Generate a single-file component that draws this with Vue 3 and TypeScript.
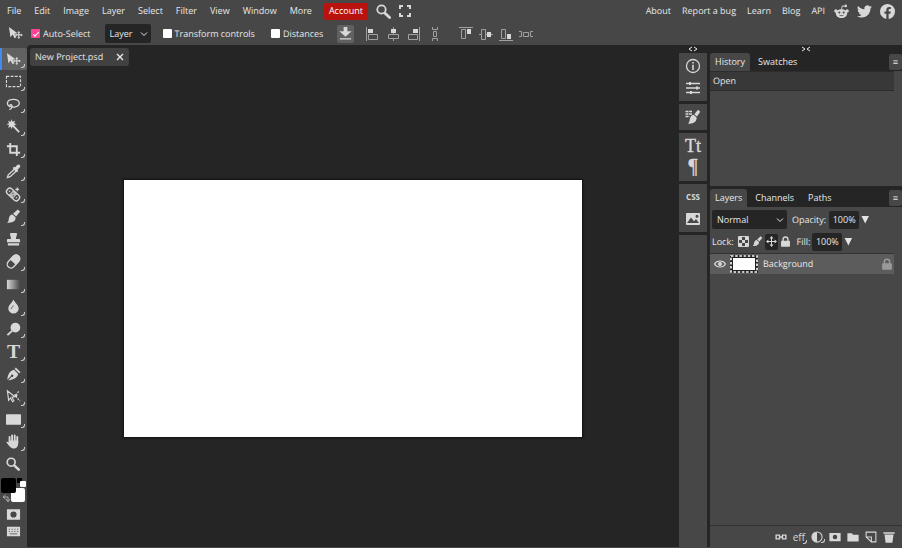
<script setup lang="ts">
import { ref } from 'vue'

interface Item {
  name: string
  icon: string
  corner?: boolean
}

const menus = ['File', 'Edit', 'Image', 'Layer', 'Select', 'Filter', 'View', 'Window', 'More']
const links = ['About', 'Report a bug', 'Learn', 'Blog', 'API']

const moveIcon =
  '<path d="M1 1l1.600 11 2.400-3 2 4 1.900-1-2-3.800 3.300-.6z"/><path d="M11.500 6.500v6M8.500 9.500h6" stroke="currentColor" stroke-width="1.200"/><path d="M11.500 5.200l1.600 1.900h-3.200zM11.500 13.800l1.600-1.900h-3.200zM7.200 9.500l1.900-1.600v3.200zM15.800 9.500l-1.900-1.600v3.200z"/>'
const brushIcon =
  '<path d="M12.500 .5l2.500 2.200-4.200 5.200-3.300-2.800z"/><path d="M6.800 5.900l3.400 3c.3 3.800-2.600 6.300-9.200 5.700 2.200-1 1.600-2.900 2.100-4.700C3.600 7.500 5 6 6.800 5.900z"/>'
const searchIcon =
  '<circle cx="5.500" cy="5.500" r="4.200" fill="none" stroke="currentColor" stroke-width="1.800"/><path d="M9 9.200l4.600 4.300" stroke="currentColor" stroke-width="2.800" stroke-linecap="round"/>'
const lockIcon =
  '<rect x="1.500" y="7" width="13" height="8.500" rx="1"/><path d="M4.500 8V5a3.500 3.500 0 017 0v3" fill="none" stroke="currentColor" stroke-width="2"/>'

const tools: Item[] = [
  { name: 'Move Tool', corner: true, icon: moveIcon },
  { name: 'Rectangle Select', corner: true, icon: '<rect x=".5" y="2.500" width="15" height="11" fill="none" stroke="currentColor" stroke-width="1.200" stroke-dasharray="3 1.500"/>' },
  { name: 'Lasso Select', corner: true, icon: '<path d="M4.500 10.500C-.5 8 1 2.500 8 2.500s8.500 6.500 2 8c-3 .7-6 0-6-1.500s3-1 2.500 1.200c-.4 1.800-1.700 3-3 3.300" fill="none" stroke="currentColor" stroke-width="1.400"/>' },
  { name: 'Magic Wand', corner: true, icon: '<path d="M6 5.500l8 8.500" stroke="currentColor" stroke-width="2"/><path d="M6 0l.9 2.800L9.700 1.800 8.700 4.600l2.800.9-2.800.9 1 2.800-2.800-1L6 11l-.9-2.800-2.800 1 1-2.800L.5 5.500l2.800-.9-1-2.800 2.800 1z"/>' },
  { name: 'Crop Tool', corner: true, icon: '<path d="M4.500 1v10.500H15M1 4.500h10.500V15" fill="none" stroke="currentColor" stroke-width="2"/>' },
  { name: 'Eyedropper', corner: true, icon: '<path d="M9 5.500l2 2-6.500 6-3 1 .9-3z" fill="none" stroke="currentColor" stroke-width="1.400"/><path d="M7 4.300l1.500-1.300 1 .8 2.400-2.700c2-1.700 4.400.5 2.800 2.500L12.200 6.200l.9 1.300-1.500 1.400z"/>' },
  { name: 'Spot Healing Brush', corner: true, icon: '<g transform="rotate(43 7.500 8)"><rect x="-.5" y="4.500" width="16" height="7" rx="3" fill="none" stroke="currentColor" stroke-width="1.400"/><rect x="4.500" y="4.500" width="6" height="7" opacity=".8"/><path d="M2 7h1v2H2zM12 7h1v2h-1z"/><circle cx="6.500" cy="7" r=".7" fill="#474747"/><circle cx="8.500" cy="9" r=".7" fill="#474747"/></g><path d="M12 .5v4M10 2.500h4" stroke="currentColor" stroke-width="1.300"/>' },
  { name: 'Brush Tool', corner: true, icon: brushIcon },
  { name: 'Clone Tool', icon: '<path d="M4.500 1h7c.8 2.500-1 4-.9 6.500H14c.6 0 1 .4 1 1V11H1V8.500c0-.6.400-1 1-1h3.400C5.500 5 3.700 3.500 4.500 1zM2 12h12v2.500H2z"/>' },
  { name: 'Eraser Tool', corner: true, icon: '<g transform="rotate(-48 8 8)"><rect x="0" y="4" width="16" height="8" rx="4" fill="none" stroke="currentColor" stroke-width="1.400"/><path d="M7 3.500h5a4.500 4.500 0 010 9H7z"/></g>' },
  { name: 'Gradient Tool', corner: true, icon: '<defs><linearGradient id="ramp"><stop offset="0" stop-color="#d8d8d8"/><stop offset="1" stop-color="#474747"/></linearGradient></defs><rect x="1" y="3" width="14" height="10" fill="url(#ramp)"/>' },
  { name: 'Blur Tool', corner: true, icon: '<path d="M8 .5c1 3 5.500 5.800 5.500 9.500a5.500 5.500 0 01-11 0C2.500 6.300 7 3.500 8 .5z"/><path d="M7.500 7c.2 2-2 2-2.200 3.500" fill="none" stroke="#474747"/>' },
  { name: 'Dodge Tool', corner: true, icon: '<circle cx="10" cy="6" r="5.200"/><path d="M6.500 9.500L1.500 14" stroke="currentColor" stroke-width="2"/>' },
  { name: 'Type Tool', corner: true, icon: '<text x="8" y="14.500" text-anchor="middle" font-family="Liberation Serif, serif" font-weight="bold" font-size="21">T</text>' },
  { name: 'Pen Tool', corner: true, icon: '<path d="M10.500 .5l5 5L14 6.700 9.200 2z"/><path d="M8.500 3l4.500 4.500c-1 4-4 5.500-10.800 6.800L6 10.500A1.300 1.300 0 105.300 9.600L1.300 13.500C2.300 7.500 4 4 8.500 3z"/>' },
  { name: 'Path Select', corner: true, icon: '<path d="M1.500 2l1.300 10 2-2.500 2.200 4 1.400-1-2-3.800 3-.5z" fill="none" stroke="currentColor" stroke-width="1.200"/><path d="M13.500 2.500L10 7.500l5 5.500" fill="none" stroke="currentColor" stroke-width="1.200" stroke-dasharray="2 1.200"/><path d="M9 5.500h3v3H9z"/>' },
  { name: 'Rectangle', corner: true, icon: '<rect x="0" y="2.500" width="16" height="11" rx=".5"/>' },
  { name: 'Hand Tool', corner: true, icon: '<path d="M3.800 3.200v5M6.500 1.500v6M9.300 1.500v6M12 3v6" stroke="currentColor" stroke-width="2" stroke-linecap="round"/><path d="M3 7h10v3c0 3.500-2 5.500-4.500 5.500C5 15.500 3.500 12.500.6 9.300c-.3-1.400 1.100-1.500 2.400-.3z"/>' },
  { name: 'Zoom Tool', icon: searchIcon },
]

const aligns: Item[] = [
  { name: 'Align left edges', icon: '<path d="M2.500 1v14" stroke="#a0a0a0"/><path d="M4 3h5v4H4z"/><path d="M4.500 8.500h9v5h-9z" fill="none" stroke="#a0a0a0"/>' },
  { name: 'Align horizontal centers', icon: '<path d="M8.500 1v14" stroke="#a0a0a0"/><path d="M6 3h5v4H6z"/><path d="M3.500 8.500h10v4h-10z" fill="#474747" stroke="#a0a0a0"/>' },
  { name: 'Align right edges', icon: '<path d="M13.500 1v14" stroke="#a0a0a0"/><path d="M7 3h5v4H7z"/><path d="M2.500 8.500h9v5h-9z" fill="none" stroke="#a0a0a0"/>' },
  { name: 'Distribute vertically', icon: '<path d="M5.500 1v2.500h5V1M5.500 15v-2.500h5V15M6.500 5.500h3v5h-3z" fill="none" stroke="#a0a0a0"/>' },
]
const alignsTop: Item[] = [
  { name: 'Align top edges', icon: '<path d="M1 1.500h14" stroke="#a0a0a0"/><path d="M9 3h4v5H9z"/><path d="M3.500 3.500h4v9h-4z" fill="none" stroke="#a0a0a0"/>' },
  { name: 'Align vertical centers', icon: '<path d="M1 8.500h14" stroke="#a0a0a0"/><path d="M9 6h4v5H9z"/><path d="M3.500 3.500h4v10h-4z" fill="#474747" stroke="#a0a0a0"/>' },
  { name: 'Align bottom edges', icon: '<path d="M1 14.500h14" stroke="#a0a0a0"/><path d="M9 8h4v5H9z"/><path d="M3.500 3.500h4v9h-4z" fill="none" stroke="#a0a0a0"/>' },
  { name: 'Distribute horizontally', icon: '<path d="M1 5.500h2.500v5H1M15 5.500h-2.500v5H15M5.500 6.500h5v4h-5z" fill="none" stroke="#a0a0a0"/>' },
]

const dock: Item[][] = [
  [
    { name: 'Info', icon: '<circle cx="8" cy="8" r="6.500" fill="none" stroke="currentColor" stroke-width="1.300"/><path d="M7.200 4h1.600v1.600H7.200zM7.200 6.700h1.600v5.300H7.200z"/>' },
    { name: 'Adjustments', icon: '<path d="M1 3.500h14M1 8h14M1 12.500h14" stroke="currentColor" stroke-width="1.400"/><path d="M4 2h2v3H4zM11 6.500h2v3h-2zM5 11h2v3H5z"/>' },
  ],
  [{ name: 'Brushes', icon: '<path d="M13 .8l2.200 1.900L12 7.500 9.300 5.200z"/><path d="M8.600 5.800l3 2.800c.2 4-2.600 6.500-8.800 6 2-1 1.600-3 2.100-4.500C5.400 7.600 6.800 5.900 8.600 5.800z"/><path d="M.5 2.500H7M.5 5H7M.5 7.500H4.500" stroke="currentColor" stroke-width="1.300" stroke-dasharray="3 .6"/>' }],
  [
    { name: 'Character', icon: '<text x="8" y="14" text-anchor="middle" font-family="Liberation Serif, serif" font-size="18" stroke="currentColor" stroke-width=".400">Tt</text>' },
    { name: 'Paragraph', icon: '<text x="8" y="13" text-anchor="middle" font-family="Liberation Serif, serif" font-size="20" stroke="currentColor" stroke-width=".400">¶</text>' },
  ],
  [
    { name: 'CSS', icon: '<text x="8" y="11" text-anchor="middle" font-family="Open Sans, sans-serif" font-weight="bold" font-size="8">CSS</text>' },
    { name: 'Image', icon: '<path fill-rule="evenodd" d="M2 2h12c.5 0 1 .5 1 1v10c0 .5-.5 1-1 1H2c-.5 0-1-.5-1-1V3c0-.5.500-1 1-1zm0 10h12l-3-4-2 2.200L6 6.500zM12 3.800a1.500 1.500 0 100 3 1.500 1.500 0 000-3z"/>' },
  ],
]

const locks: Item[] = [
  { name: 'Lock transparency', icon: '<g transform="scale(1.4545)"><path fill="none" stroke="currentColor" d="M.5 .5h10v10H.5z"/><path d="M1 1h3v3H1zM7 1h3v3H7zM4 4h3v3H4zM1 7h3v3H1zM7 7h3v3H7z"/></g>' },
  { name: 'Lock pixels', icon: brushIcon },
  { name: 'Lock position', icon: '<path d="M8 2v12M2 8h12" stroke="currentColor" stroke-width="1.500"/><path d="M8 0l2.800 3.500H5.200zM8 16l2.800-3.500H5.200zM0 8l3.500-2.800v5.600zM16 8l-3.500-2.800v5.600z"/>' },
  { name: 'Lock all', icon: lockIcon },
]

const actions: Item[] = [
  { name: 'Link layers', icon: '<path d="M1.500 5.500h4.500v5H1.500zM10 5.500h4.500v5H10zM6 8h4" fill="none" stroke="currentColor" stroke-width="1.800"/>' },
  { name: 'Layer effects', icon: '' },
  { name: 'Adjustment layer', corner: true, icon: '<circle cx="8" cy="8" r="6.800" fill="none" stroke="currentColor" stroke-width="1.400"/><path d="M8 1.500a6.500 6.500 0 000 13z"/>' },
  { name: 'Add mask', icon: '<path fill-rule="evenodd" d="M.5 2.500h15v11H.5zM8 5a3 3 0 100 6 3 3 0 000-6z"/>' },
  { name: 'New folder', icon: '<path d="M.5 3h6L8 5h7.500v9H.5z"/>' },
  { name: 'New layer', icon: '<path d="M1.500 1.500h13v13H8.500l-7-6.500zM2 8h6.500v6.500" fill="none" stroke="currentColor" stroke-width="1.400"/>' },
  { name: 'Delete layer', icon: '<path d="M.5 1.500h15v2H.5zM2 4.500h12L12.500 15.500h-9z"/>' },
]

const activeTool = ref('Move Tool')
const autoSelect = ref(true)
const transformControls = ref(false)
const distances = ref(false)
const opacity = ref('100%')
const fill = ref('100%')
</script>

<template>
  <div class="app">
    <header>
      <nav class="menubar">
        <div class="menus">
          <button v-for="m in menus" :key="m" type="button">{{ m }}</button>
        </div>
        <button type="button" class="account">Account</button>
        <button type="button" class="search" aria-label="Search">
          <svg class="icon" viewBox="0 0 15 15" v-html="searchIcon"></svg>
        </button>
        <button type="button" class="full" aria-label="Fullscreen">
          <svg class="small" viewBox="0 0 12 12">
            <path d="M1 4V1h3M8 1h3v3M11 8v3H8M4 11H1V8" fill="none" stroke="currentColor" stroke-width="2" />
          </svg>
        </button>
        <div class="links">
          <a v-for="l in links" :key="l" href="#">{{ l }}</a>
        </div>
        <div class="social">
          <a href="#" aria-label="Reddit">
            <svg class="icon" viewBox="0 0 16 16">
              <path fill-rule="evenodd" d="M8 5.500c3.500 0 6 1.900 6 4.600S11.500 15 8 15s-6-2.200-6-4.900 2.500-4.600 6-4.600zM5.700 8a1.100 1.100 0 100 2.200 1.100 1.100 0 000-2.200zm4.600 0a1.100 1.100 0 100 2.200 1.100 1.100 0 000-2.200zM5.300 11.500c1 2 4.400 2 5.400 0-1.600.8-3.800.8-5.400 0z" />
              <circle cx="2" cy="7.500" r="1.800" /><circle cx="14" cy="7.500" r="1.800" /><circle cx="12.500" cy="2" r="1.400" />
              <path d="M8 6l.8-4 3 .6" fill="none" stroke="currentColor" />
            </svg>
          </a>
          <a href="#" aria-label="Twitter">
            <svg class="icon" viewBox="0 0 24 24">
              <path d="M23.950 4.570a10 10 0 01-2.820.77 4.960 4.960 0 002.160-2.720c-.95.550-2 .95-3.130 1.180a4.920 4.920 0 00-8.380 4.480C7.690 8.090 4.070 6.130 1.640 3.160a4.930 4.930 0 001.520 6.570 4.900 4.900 0 01-2.230-.61v.06a4.920 4.920 0 003.950 4.830 5 5 0 01-2.210.08 4.940 4.940 0 004.600 3.420A9.870 9.870 0 010 19.540a14 14 0 007.550 2.210c9.050 0 14-7.500 14-13.980 0-.21 0-.42-.02-.63a9.940 9.940 0 002.460-2.550z" />
            </svg>
          </a>
          <a href="#" aria-label="Facebook">
            <svg class="icon" viewBox="0 0 24 24">
              <path d="M24 12a12 12 0 10-13.900 11.900v-8.400H7.100V12h3V9.400c0-3 1.800-4.700 4.500-4.700 1.300 0 2.700.2 2.700.2v3h-1.500c-1.500 0-2 .9-2 1.900V12h3.400l-.6 3.500h-2.800v8.400A12 12 0 0024 12z" />
            </svg>
          </a>
        </div>
      </nav>

      <div class="options">
        <svg class="icon current" viewBox="0 0 16 16" v-html="moveIcon"></svg>
        <label class="auto"><input v-model="autoSelect" type="checkbox" />Auto-Select</label>
        <span class="select target">
          <select aria-label="Auto-select target"><option>Layer</option><option>Group</option></select>
          <svg viewBox="0 0 8 8"><path d="M1 2.500l3 3 3-3" fill="none" stroke="currentColor" /></svg>
        </span>
        <label class="controls"><input v-model="transformControls" type="checkbox" />Transform controls</label>
        <label><input v-model="distances" type="checkbox" />Distances</label>
        <button type="button" class="download" aria-label="Export">
          <svg class="icon" viewBox="0 0 16 16"><path d="M6 1h4v4.500h4.500L8 11.500 1.500 5.500H6zM2 13h12v1.500H2z" /></svg>
        </button>
        <div class="aligns">
          <button v-for="a in aligns" :key="a.name" type="button" :aria-label="a.name">
            <svg class="icon" viewBox="0 0 16 16" v-html="a.icon"></svg>
          </button>
        </div>
        <div class="aligns compact">
          <button v-for="a in alignsTop" :key="a.name" type="button" :aria-label="a.name">
            <svg class="icon" viewBox="0 0 16 16" v-html="a.icon"></svg>
          </button>
        </div>
      </div>
    </header>

    <div class="body">
      <aside class="toolbar">
        <button
          v-for="t in tools"
          :key="t.name"
          type="button"
          class="tool"
          :class="{ active: t.name === activeTool, corner: t.corner }"
          :aria-label="t.name"
          @click="activeTool = t.name"
        >
          <svg class="icon" viewBox="0 0 16 16" v-html="t.icon"></svg>
        </button>
        <svg class="swatches" viewBox="0 0 27 26">
          <rect x="17" y="1" width="5" height="5" fill="#000" />
          <rect x="20" y="4" width="6" height="6" rx="1" fill="#fff" />
          <rect x="11" y="11" width="14" height="14" rx="2" fill="#fff" />
          <rect x="1" y="1" width="15" height="15" rx="2" fill="#000" />
          <path d="M4 20h4v4M5.500 18L3 20l2.500 2M6 22l2 3 2-3" fill="none" stroke="#aaa" />
        </svg>
        <button type="button" class="mode" aria-label="Quick Mask">
          <svg class="icon" viewBox="0 0 16 16"><path fill-rule="evenodd" d="M1 2.500h14v11H1zM8 4.700a3.300 3.300 0 100 6.600 3.300 3.300 0 000-6.600z" /></svg>
        </button>
        <button type="button" class="mode" aria-label="Keyboard">
          <svg class="icon" viewBox="0 0 16 16">
            <path fill-rule="evenodd" d="M1 3h14v10H1zM3 5h1v1H3zM6 5h1v1H6zM9 5h1v1H9zM12 5h1v1h-1zM3 7.500h1v1H3zM6 7.500h1v1H6zM9 7.500h1v1H9zM12 7.500h1v1h-1zM4 10h8v1H4z" />
          </svg>
        </button>
      </aside>

      <main class="workspace">
        <div class="doctabs">
          <div class="doctab">
            New Project.psd
            <button type="button" aria-label="Close">
              <svg viewBox="0 0 8 8"><path d="M1 1l6 6M7 1L1 7" stroke="currentColor" stroke-width="1.400" /></svg>
            </button>
          </div>
        </div>
        <div class="stage"><div class="canvas"></div></div>
      </main>

      <aside class="dock">
        <button type="button" class="toggle" aria-label="Expand panels">
          <svg viewBox="0 0 10 6"><path d="M4 1L1 3l3 2M6 1l3 2-3 2" fill="none" stroke="currentColor" /></svg>
        </button>
        <div v-for="(group, i) in dock" :key="i" class="group">
          <button v-for="d in group" :key="d.name" type="button" :aria-label="d.name">
            <svg class="icon" viewBox="0 0 16 16" v-html="d.icon"></svg>
          </button>
        </div>
        <div class="group rest"></div>
      </aside>

      <aside class="panels">
        <button type="button" class="toggle" aria-label="Collapse panels">
          <svg viewBox="0 0 10 6"><path d="M1 1l3 2-3 2M9 1L6 3l3 2" fill="none" stroke="currentColor" /></svg>
        </button>

        <section class="panel">
          <div class="tabs">
            <button type="button" class="tab on">History</button>
            <button type="button" class="tab">Swatches</button>
            <button type="button" class="more" aria-label="History menu">≡</button>
          </div>
          <div class="history"><div class="entry">Open</div></div>
        </section>

        <section class="panel layers">
          <div class="tabs">
            <button type="button" class="tab on">Layers</button>
            <button type="button" class="tab">Channels</button>
            <button type="button" class="tab">Paths</button>
            <button type="button" class="more" aria-label="Layers menu">≡</button>
          </div>
          <div class="row">
            <span class="select blend">
              <select aria-label="Blend mode"><option>Normal</option><option>Multiply</option></select>
              <svg viewBox="0 0 8 8"><path d="M1 2.500l3 3 3-3" fill="none" stroke="currentColor" /></svg>
            </span>
            <label class="value">Opacity:<input v-model="opacity" type="text" /></label>
            <button type="button" class="drop" aria-label="Opacity slider"></button>
          </div>
          <div class="row lockrow">
            <span>Lock:</span>
            <div class="locks">
              <button v-for="l in locks" :key="l.name" type="button" :class="{ on: l.name === 'Lock position' }" :aria-label="l.name">
                <svg class="small" viewBox="0 0 16 16" v-html="l.icon"></svg>
              </button>
            </div>
            <label class="value">Fill:<input v-model="fill" type="text" /></label>
            <button type="button" class="drop" aria-label="Fill slider"></button>
          </div>
          <div class="layerlist">
            <div class="layer">
              <button type="button" class="eye" aria-label="Toggle visibility">
                <svg class="small" viewBox="0 0 12 12">
                  <path d="M.5 6C3 2 9 2 11.500 6 9 10 3 10 .5 6z" fill="none" stroke="currentColor" stroke-width="1.200" />
                  <circle cx="6" cy="6" r="2" />
                </svg>
              </button>
              <svg class="thumb" viewBox="0 0 28 18">
                <path d="M0 0h28v18H0z" fill="#222" />
                <path d="M1 1h26v16H1z" fill="none" stroke="#fff" stroke-width="1.600" stroke-dasharray="2.500 1.700" />
                <path d="M3 3h22v12H3z" fill="#fff" />
              </svg>
              <span class="name">Background</span>
              <svg class="small locked" viewBox="0 0 16 16" v-html="lockIcon"></svg>
            </div>
          </div>
          <footer class="actions">
            <button v-for="a in actions" :key="a.name" type="button" :class="{ corner: a.corner || !a.icon }" :aria-label="a.name">
              <svg v-if="a.icon" class="small" viewBox="0 0 16 16" v-html="a.icon"></svg>
              <span v-else class="eff">eff</span>
            </button>
          </footer>
        </section>
      </aside>
    </div>
  </div>
</template>

<style>
body {
  margin: 0;
  background: #474747;
}
</style>

<style scoped>
.app {
  display: flex;
  flex-direction: column;
  min-height: 100vh;
  box-sizing: border-box;
  padding-bottom: 1px;
  font: 9px/14px 'Open Sans', 'Noto Sans', sans-serif;
  text-rendering: geometricPrecision;
  color: #e8e8e8;
  background: #474747;
}
button,
select,
input {
  margin: 0;
  padding: 0;
  border: 0;
  background: none;
  color: inherit;
  font: inherit;
}
button {
  display: flex;
  align-items: center;
  justify-content: center;
}
a {
  color: inherit;
  text-decoration: none;
}
svg {
  display: block;
  fill: currentColor;
  overflow: visible;
}
.icon {
  width: 15px;
  height: 15px;
  color: #d8d8d8;
}
.small {
  width: 12px;
  height: 12px;
  color: #d8d8d8;
}
.menubar {
  display: flex;
  align-items: center;
  height: 22px;
  padding: 0 7px;
}
.menus {
  display: flex;
  gap: 13px;
}
.account {
  height: 17px;
  margin: 0 8px 0 12px;
  padding: 0 5px;
  border-radius: 2px;
  background: #b9130f;
  color: #fff;
}
.full {
  margin-left: 8px;
}
.links {
  display: flex;
  gap: 11px;
  margin-left: auto;
}
.social {
  display: flex;
  gap: 8px;
  margin-left: 9px;
}
.options {
  display: flex;
  align-items: center;
  height: 23px;
  padding: 0 8px;
}
.options label {
  display: flex;
  align-items: center;
  gap: 3px;
}
.options input {
  appearance: none;
  display: grid;
  place-items: center;
  width: 9px;
  height: 9px;
  border-radius: 1px;
  background: #fff;
}
.options input:checked {
  background: #ff4595;
}
.options input:checked::before {
  content: '';
  width: 5px;
  height: 2px;
  border: solid #fff;
  border-width: 0 0 1px 1px;
  transform: rotate(-45deg);
}
.current {
  margin-right: 8px;
}
.select {
  position: relative;
  display: flex;
  align-items: center;
}
.select select {
  appearance: none;
  width: 100%;
  height: 19px;
  padding: 0 16px 0 5px;
  border-radius: 2px;
  background: #252525;
}
.select svg {
  position: absolute;
  right: 3px;
  width: 8px;
  height: 8px;
  pointer-events: none;
}
.target {
  width: 46px;
  margin: 0 12px 0 14px;
}
.controls {
  margin-right: 16px;
}
.download {
  width: 17px;
  height: 18px;
  margin: 0 10px 0 14px;
  border-radius: 2px;
  background: #616161;
}
.aligns {
  display: flex;
  gap: 5px;
}
.compact {
  gap: 4px;
  margin-left: 15px;
}
.aligns .icon,
.dock .icon {
  width: 16px;
  height: 16px;
}
.body {
  flex: 1;
  display: flex;
}
.toolbar {
  display: flex;
  flex-direction: column;
  width: 27px;
  padding-top: 3px;
}
.tool {
  position: relative;
  height: 22px;
  border-left: 2px solid transparent;
  border-radius: 0 2px 2px 0;
  padding-right: 2px;
}
.tool:nth-child(even) {
  height: 23px;
}
.tool.active {
  border-left-color: #4489f5;
  background: #616161;
}
.corner {
  position: relative;
}
.corner::after {
  content: '';
  position: absolute;
  right: 2px;
  bottom: 2px;
  width: 3px;
  height: 3px;
  border: solid #ccc;
  border-width: 0 1px 1px 0;
  border-bottom-right-radius: 3px;
}
.swatches {
  width: 27px;
  height: 26px;
  margin: 2px 0 3px;
}
.mode {
  height: 17px;
}
.workspace {
  flex: 1;
  display: flex;
  flex-direction: column;
  border-top-left-radius: 4px;
  background: #252525;
}
.doctabs {
  display: flex;
  padding: 3px 3px 0;
}
.doctab {
  display: flex;
  align-items: center;
  gap: 13px;
  height: 18px;
  padding: 0 5px;
  border-radius: 3px;
  background: #414141;
}
.doctab svg {
  width: 8px;
  height: 8px;
}
.stage {
  flex: 1;
  display: flex;
  align-items: center;
  justify-content: center;
  padding-top: 4px;
}
.canvas {
  width: 70.300%;
  aspect-ratio: 16 / 9;
  background: #fff;
  box-shadow: 0 0 2px 1px #111;
}
.toggle {
  width: 100%;
  height: 8px;
}
.toggle svg {
  width: 10px;
  height: 6px;
}
.dock {
  display: flex;
  flex-direction: column;
  gap: 3px;
  width: 28px;
  padding-right: 3px;
  background: #252525;
}
.dock .toggle {
  margin-bottom: -3px;
}
.group {
  padding: 2px 0;
  background: #474747;
}
.group button {
  width: 100%;
  height: 22px;
}
.rest {
  flex: 1;
}
.panels {
  display: flex;
  flex-direction: column;
  width: 192px;
  background: #252525;
}
.tabs {
  display: flex;
  height: 18px;
}
.tab {
  padding: 0 5px;
}
.tab + .tab {
  padding: 0 8px;
}
.tab.on {
  border-radius: 3px 3px 0 0;
  background: #474747;
}
.tab + .tab + .tab {
  padding: 0 6px;
}
.more {
  width: 13px;
  height: 16px;
  margin: 1px 0 0 auto;
  border-radius: 2px;
  background: #474747;
}
.history {
  height: 115px;
  padding-right: 8px;
  background: #474747;
}
.entry {
  padding: 2px 3px;
  border: solid #2c2c2c;
  border-width: 1px 0;
  background: #383838;
}
.layers {
  flex: 1;
  display: flex;
  flex-direction: column;
  margin-top: 3px;
  background: #474747;
}
.layers .tabs {
  background: #252525;
}
.row {
  display: flex;
  align-items: center;
  height: 19px;
  padding: 3px 0 0 2px;
}
.blend {
  width: 75px;
  margin-right: 5px;
}
.value {
  display: flex;
  align-items: center;
  gap: 3px;
}
.value input {
  width: 30px;
  height: 18px;
  border-radius: 2px;
  background: #252525;
  text-align: center;
}
.drop {
  width: 8px;
  height: 8px;
  margin-left: 2px;
  background: #e4e4e4;
  clip-path: polygon(0 0, 100% 0, 50% 100%);
}
.lockrow .value {
  gap: 2px;
}
.locks {
  display: flex;
  gap: 1px;
  margin: 0 5px 0 3px;
}
.locks button {
  width: 13px;
  height: 16px;
  border-radius: 2px;
}
.locks .on {
  background: #252525;
}
.locks .small {
  width: 11px;
  height: 11px;
}
.layerlist {
  flex: 1;
  margin-top: 2px;
  padding-right: 8px;
}
.layer {
  display: flex;
  align-items: center;
  height: 20px;
  border-top: 1px solid #333;
  background: #5c5c5c;
}
.eye {
  margin: 0 4px;
}
.thumb {
  width: 28px;
  height: 18px;
}
.name {
  margin-left: 5px;
}
.locked {
  margin-left: auto;
  margin-right: 1px;
  color: #999;
}
.actions {
  display: flex;
  align-items: center;
  justify-content: flex-end;
  gap: 6px;
  height: 21px;
  padding-right: 7px;
  border-top: 1px solid #333;
}
.actions .corner::after {
  right: -2px;
  bottom: 0;
}
.eff {
  font-size: 10px;
  color: #d4d4d4;
}
</style>
